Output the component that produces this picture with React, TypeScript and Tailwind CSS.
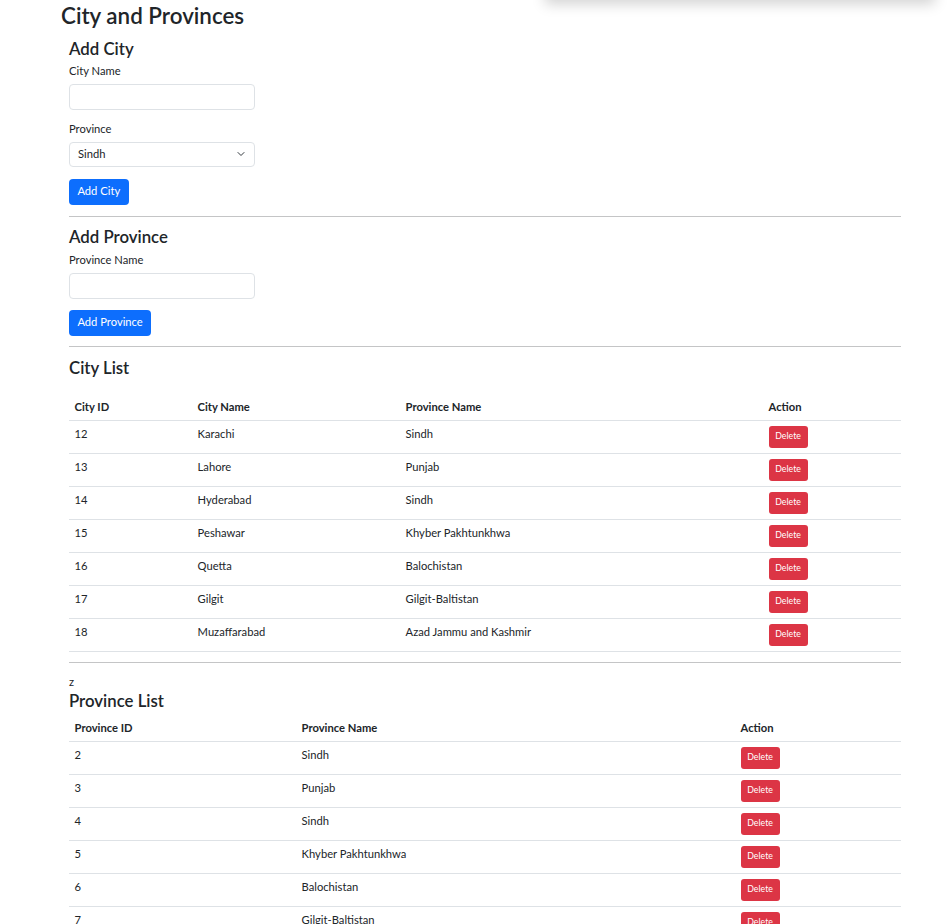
import React from "react";

const cities = [
  ["12", "Karachi", "Sindh"],
  ["13", "Lahore", "Punjab"],
  ["14", "Hyderabad", "Sindh"],
  ["15", "Peshawar", "Khyber Pakhtunkhwa"],
  ["16", "Quetta", "Balochistan"],
  ["17", "Gilgit", "Gilgit-Baltistan"],
  ["18", "Muzaffarabad", "Azad Jammu and Kashmir"],
];

const provinces = [
  ["2", "Sindh"],
  ["3", "Punjab"],
  ["4", "Sindh"],
  ["5", "Khyber Pakhtunkhwa"],
  ["6", "Balochistan"],
  ["7", "Gilgit-Baltistan"],
];

function DeleteBtn() {
  return (
    <button className="h-[22px] w-[39px] rounded-[3px] bg-[#dc3545] text-[8.75px] leading-none text-white">
      Delete
    </button>
  );
}

export default function App() {
  return (
    <div
      className="relative min-h-[924px] overflow-hidden bg-white text-[#212529]"
      style={{ fontFamily: 'Lato, "Noto Sans", sans-serif' }}
    >
      <div className="absolute left-[545px] top-[-40px] h-[40px] w-[390px] bg-white shadow-[0_4px_14px_rgba(0,0,0,0.18)]" />
      <div className="pl-[61px] pt-[3px]">
        <h2 className="text-[22.4px] font-semibold leading-[1.2]">City and Provinces</h2>
        <div className="ml-[8px] w-[832px]">
          <h4 className="mt-[9px] text-[16.8px] font-semibold leading-[1.2]">Add City</h4>
          <label className="mt-[4px] block text-[11.2px] leading-[1.5]">City Name</label>
          <div className="mt-[4px] h-[26px] w-[186px] rounded-[4px] border border-[#dee2e6]" />
          <label className="mt-[11px] block text-[11.2px] leading-[1.5]">Province</label>
          <div className="mt-[4px] flex h-[25px] w-[186px] items-center justify-between rounded-[4px] border border-[#dee2e6] pl-[8px] pr-[8px]">
            <span className="text-[11.2px]">Sindh</span>
            <svg width="10" height="8" viewBox="0 0 16 16" fill="none" stroke="#343a40" strokeWidth="2" strokeLinecap="round" strokeLinejoin="round">
              <path d="M2 5l6 6 6-6" />
            </svg>
          </div>
          <button className="mt-[12px] block h-[26px] rounded-[4px] bg-[#0d6efd] px-[8.4px] text-[11.2px] text-white">
            Add City
          </button>
          <hr className="mt-[11px] border-t border-[#c4c5c6]" />
          <h4 className="mt-[10px] text-[16.8px] font-semibold leading-[1.2]">Add Province</h4>
          <label className="mt-[5px] block text-[11.2px] leading-[1.5]">Province Name</label>
          <div className="mt-[4px] h-[26px] w-[186px] rounded-[4px] border border-[#dee2e6]" />
          <button className="mt-[11px] block h-[26px] rounded-[4px] bg-[#0d6efd] px-[8.4px] text-[11.2px] text-white">
            Add Province
          </button>
          <hr className="mt-[10px] border-t border-[#c4c5c6]" />
          <h4 className="mt-[11px] text-[16.8px] font-semibold leading-[1.2]">City List</h4>
          <table className="mt-[16px] w-[832px] table-fixed border-collapse text-[11.2px] leading-[1.5]">
            <colgroup>
              <col className="w-[123px]" />
              <col className="w-[208px]" />
              <col className="w-[363px]" />
              <col className="w-[138px]" />
            </colgroup>
            <thead>
              <tr className="border-b border-[#dee2e6]">
                <th className="px-[5.6px] pb-[3.6px] pt-[5.6px] text-left font-bold">City ID</th>
                <th className="px-[5.6px] pb-[3.6px] pt-[5.6px] text-left font-bold">City Name</th>
                <th className="px-[5.6px] pb-[3.6px] pt-[5.6px] text-left font-bold">Province Name</th>
                <th className="px-[5.6px] pb-[3.6px] pt-[5.6px] text-left font-bold">Action</th>
              </tr>
            </thead>
            <tbody>
              {cities.map((c) => (
                <tr key={c[0]} className="h-[33px] border-b border-[#dee2e6]">
                  <td className="px-[5.6px] pb-[4px] pt-0 align-middle">{c[0]}</td>
                  <td className="px-[5.6px] pb-[4px] pt-0 align-middle">{c[1]}</td>
                  <td className="px-[5.6px] pb-[4px] pt-0 align-middle">{c[2]}</td>
                  <td className="px-[5.6px] py-0 align-middle">
                    <DeleteBtn />
                  </td>
                </tr>
              ))}
            </tbody>
          </table>
          <hr className="mt-[10px] border-t border-[#c4c5c6]" />
          <div className="mt-[11px] text-[11.2px] leading-[1.5]">z</div>
          <h4 className="text-[16.8px] font-semibold leading-[1.2]">Province List</h4>
          <table className="mt-[4px] w-[832px] table-fixed border-collapse text-[11.2px] leading-[1.5]">
            <colgroup>
              <col className="w-[227px]" />
              <col className="w-[439px]" />
              <col className="w-[166px]" />
            </colgroup>
            <thead>
              <tr className="border-b border-[#dee2e6]">
                <th className="px-[5.6px] pb-[3.6px] pt-[5.6px] text-left font-bold">Province ID</th>
                <th className="px-[5.6px] pb-[3.6px] pt-[5.6px] text-left font-bold">Province Name</th>
                <th className="px-[5.6px] pb-[3.6px] pt-[5.6px] text-left font-bold">Action</th>
              </tr>
            </thead>
            <tbody>
              {provinces.map((p) => (
                <tr key={p[0]} className="h-[33px] border-b border-[#dee2e6]">
                  <td className="px-[5.6px] pb-[4px] pt-0 align-middle">{p[0]}</td>
                  <td className="px-[5.6px] pb-[4px] pt-0 align-middle">{p[1]}</td>
                  <td className="px-[5.6px] py-0 align-middle">
                    <DeleteBtn />
                  </td>
                </tr>
              ))}
            </tbody>
          </table>
        </div>
      </div>
    </div>
  );
}
